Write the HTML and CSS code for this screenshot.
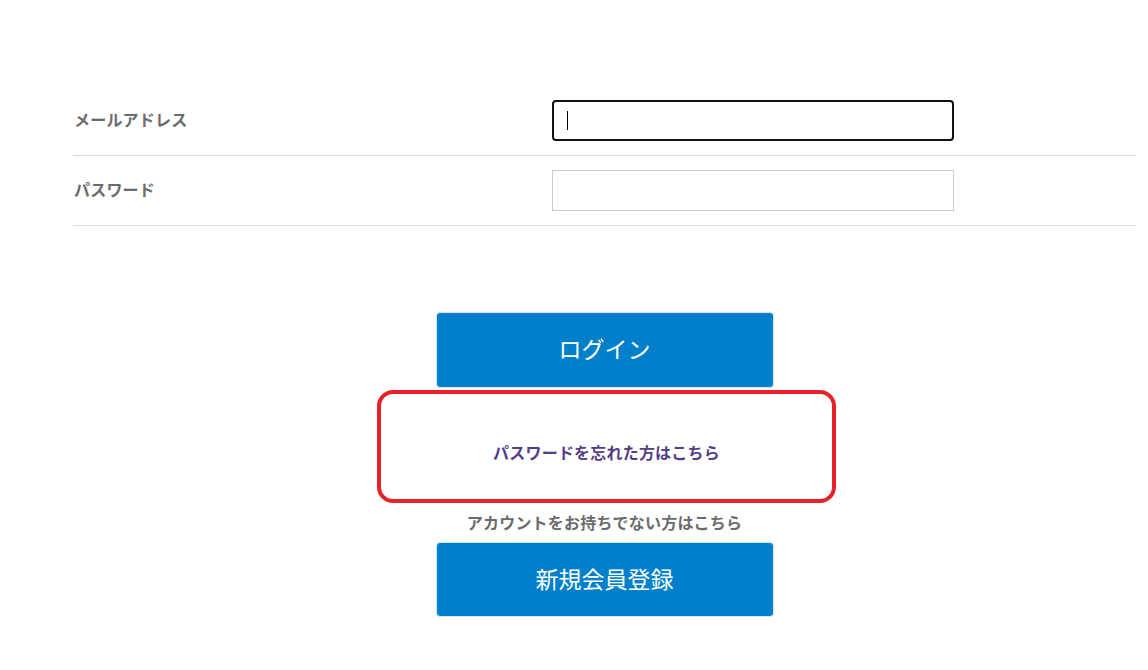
FILE: index.html
```html
<!DOCTYPE html>
<html lang="ja">
<head>
<meta charset="utf-8">
<link rel="stylesheet" href="styles.css">
</head>
<body>
<div class="page">
  <div class="form">
    <div class="row">
      <label class="label">メールアドレス</label>
      <div class="field"><div class="input focused"><span class="caret"></span></div></div>
    </div>
    <div class="row">
      <label class="label">パスワード</label>
      <div class="field"><div class="input"></div></div>
    </div>
  </div>
  <div class="actions">
    <button class="btn login">ログイン</button>
    <div class="forgot"><a class="forgot-link">パスワードを忘れた方はこちら</a></div>
    <p class="note">アカウントをお持ちでない方はこちら</p>
    <button class="btn signup">新規会員登録</button>
  </div>
</div>
</body>
</html>
```
FILE: styles.css
```css
html, body { margin: 0; padding: 0; background: #fff; }
body { font-family: "Noto Sans CJK JP", "Noto Sans", sans-serif; }
.page { margin-left: 73px; width: 1063px; padding-top: 86px; }
.form { display: flex; flex-direction: column; }
.row { display: flex; align-items: center; height: 69px; border-bottom: 1px solid #dcdcdc; }
.label { width: 479px; font-size: 16px; letter-spacing: 0.2px; font-weight: bold; color: #6b6b6b; padding-left: 1px; padding-bottom: 3px; box-sizing: border-box; }
.field { flex: 0 0 auto; }
.input { width: 402px; height: 41px; box-sizing: border-box; border: 1px solid #cccccc; background: #fff; display: flex; align-items: center; }
.input.focused { border: 2px solid #111; border-radius: 4px; padding-left: 13px; }
.caret { display: block; width: 1px; height: 19px; background: #000; }
.actions { display: flex; flex-direction: column; align-items: center; padding-top: 86px; }
.btn { width: 338px; height: 76px; border: 1px solid #d9e6f0; border-radius: 4px; background: #0080cb; color: #fff; font-family: inherit; font-size: 23px; display: block; padding: 0 0 4px; }
.forgot { margin-top: 2px; width: 459px; height: 113px; box-sizing: border-box; border: 4px solid #e8202a; border-radius: 16px; display: flex; align-items: center; justify-content: center; margin-left: 4px; }
.forgot-link { font-size: 16px; letter-spacing: 0.2px; font-weight: bold; color: #553d87; padding-top: 11px; }
.note { margin: 9px 0 10px; font-size: 16px; letter-spacing: 0.2px; font-weight: bold; color: #6b6b6b; line-height: 20px; }
.signup { height: 75px; }
```
